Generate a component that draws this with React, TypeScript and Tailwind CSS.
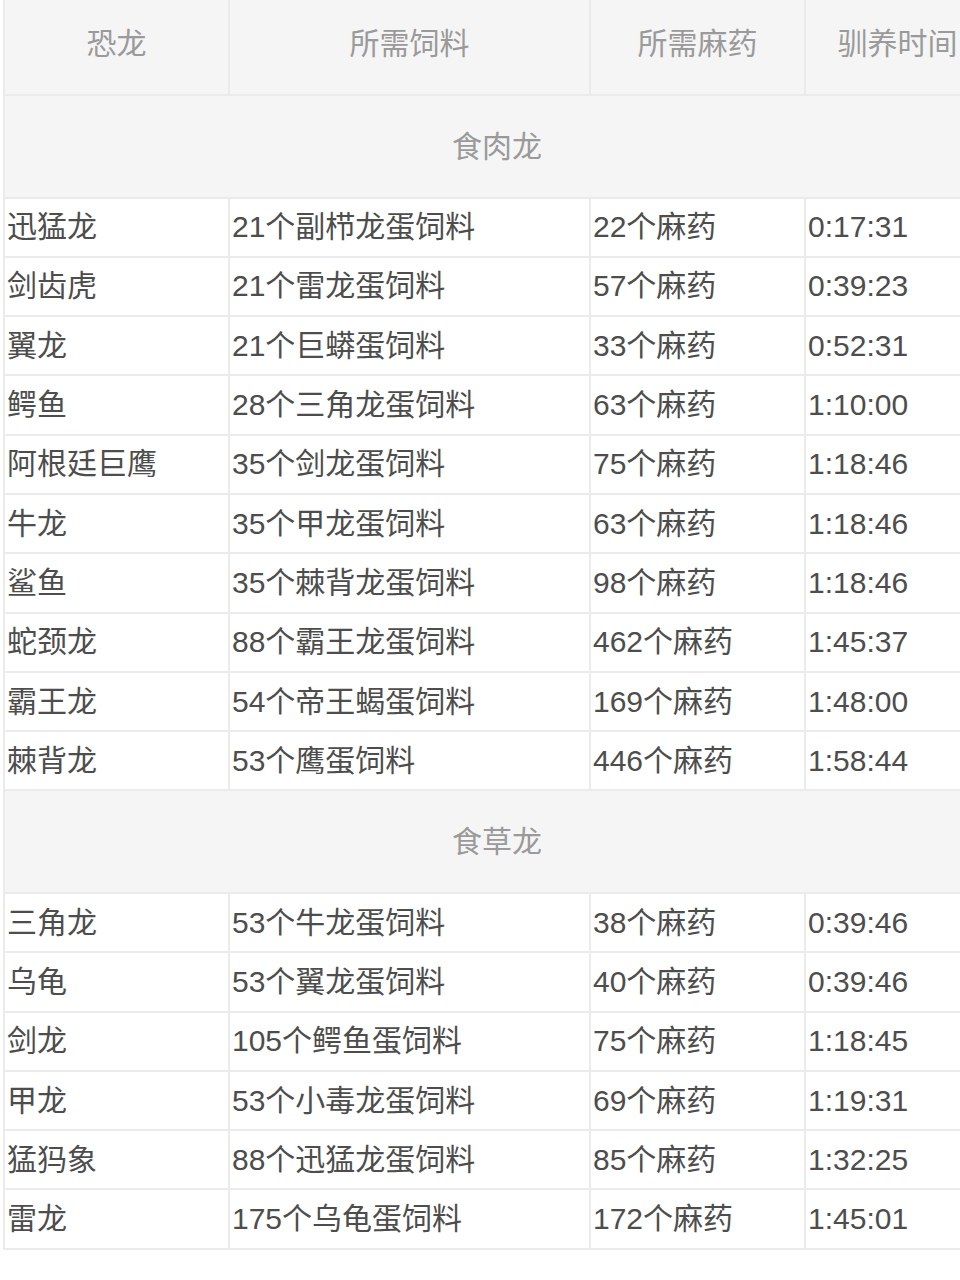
const font = '"Liberation Sans", "Noto Sans CJK SC", sans-serif';

type Row = [string, string, string, string];

const carnivores: Row[] = [
  ['迅猛龙', '21个副栉龙蛋饲料', '22个麻药', '0:17:31'],
  ['剑齿虎', '21个雷龙蛋饲料', '57个麻药', '0:39:23'],
  ['翼龙', '21个巨蟒蛋饲料', '33个麻药', '0:52:31'],
  ['鳄鱼', '28个三角龙蛋饲料', '63个麻药', '1:10:00'],
  ['阿根廷巨鹰', '35个剑龙蛋饲料', '75个麻药', '1:18:46'],
  ['牛龙', '35个甲龙蛋饲料', '63个麻药', '1:18:46'],
  ['鲨鱼', '35个棘背龙蛋饲料', '98个麻药', '1:18:46'],
  ['蛇颈龙', '88个霸王龙蛋饲料', '462个麻药', '1:45:37'],
  ['霸王龙', '54个帝王蝎蛋饲料', '169个麻药', '1:48:00'],
  ['棘背龙', '53个鹰蛋饲料', '446个麻药', '1:58:44'],
];

const herbivores: Row[] = [
  ['三角龙', '53个牛龙蛋饲料', '38个麻药', '0:39:46'],
  ['乌龟', '53个翼龙蛋饲料', '40个麻药', '0:39:46'],
  ['剑龙', '105个鳄鱼蛋饲料', '75个麻药', '1:18:45'],
  ['甲龙', '53个小毒龙蛋饲料', '69个麻药', '1:19:31'],
  ['猛犸象', '88个迅猛龙蛋饲料', '85个麻药', '1:32:25'],
  ['雷龙', '175个乌龟蛋饲料', '172个麻药', '1:45:01'],
];

const headers = ['恐龙', '所需饲料', '所需麻药', '驯养时间'];

const Category = ({ label }: { label: string }) => (
  <tr className="h-[102.5px] bg-[#f5f5f5]">
    <td colSpan={4} className="border-2 border-[#ebebeb] text-center text-[30px] text-[#9a9a9a]">
      {label}
    </td>
  </tr>
);

const DataRow = ({ row }: { row: Row }) => (
  <tr className="h-[59.3px] bg-white">
    {row.map((cell, i) => (
      <td
        key={i}
        className="border-2 border-[#ebebeb] pl-[2px] text-[30px] leading-none text-[#4d4d4d] whitespace-nowrap"
      >
        {cell}
      </td>
    ))}
  </tr>
);

export default function App() {
  return (
    <div className="w-[960px] h-[1280px] overflow-hidden bg-white" style={{ fontFamily: font }}>
      <table className="ml-[3px] w-[986px] table-fixed border-collapse">
        <colgroup>
          <col className="w-[225px]" />
          <col className="w-[361px]" />
          <col className="w-[215px]" />
          <col className="w-[185px]" />
        </colgroup>
        <thead>
          <tr className="h-[95px] bg-[#f5f5f5]">
            {headers.map((h) => (
              <th
                key={h}
                className="border-2 border-t-0 border-[#ebebeb] pb-[8px] text-center text-[30px] font-normal text-[#9a9a9a]"
              >
                {h}
              </th>
            ))}
          </tr>
        </thead>
        <tbody>
          <Category label="食肉龙" />
          {carnivores.map((r) => (
            <DataRow key={r[0]} row={r} />
          ))}
          <Category label="食草龙" />
          {herbivores.map((r) => (
            <DataRow key={r[0]} row={r} />
          ))}
        </tbody>
      </table>
    </div>
  );
}
